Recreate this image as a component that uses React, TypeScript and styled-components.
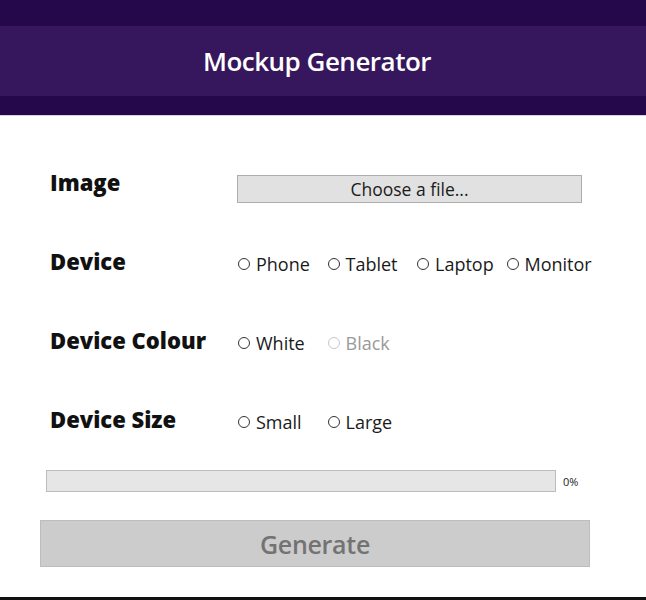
import React, { useState } from 'react';
import styled, { createGlobalStyle } from 'styled-components';

const GlobalStyle = createGlobalStyle`
  * {
    box-sizing: border-box;
  }
  body {
    margin: 0;
    background: #ffffff;
    font-family: 'Open Sans', 'Noto Sans', sans-serif;
    color: #1a1a1a;
  }
`;

const DEVICES = ['Phone', 'Tablet', 'Laptop', 'Monitor'];
const COLOURS = ['White', 'Black'];
const SIZES = ['Small', 'Large'];

const Page = styled.div`
  height: 600px;
  display: flex;
  flex-direction: column;
  border-bottom: 3px solid #111111;
`;

const Header = styled.header`
  background: #25084c;
  padding: 26px 0 19px;
  border-bottom: 1px solid #d8d4de;
`;

const TitleBar = styled.div`
  height: 70px;
  background: #36175d;
  display: flex;
  align-items: center;
  justify-content: center;
  padding-right: 12px;
`;

const Title = styled.h1`
  margin: 0;
  font-size: 26px;
  font-weight: 600;
  color: #ffffff;
  letter-spacing: -0.5px;
`;

const Form = styled.form`
  padding: 51px 40px 0;
  display: flex;
  flex-direction: column;
`;

const Row = styled.div<{ $last?: boolean }>`
  display: grid;
  grid-template-columns: 187px auto;
  align-items: start;
  height: 30px;
  padding-left: 10px;
  margin-bottom: ${(p) => (p.$last ? '36px' : '49px')};
`;

const Label = styled.div`
  font-size: 22px;
  font-weight: 800;
  line-height: 30px;
  color: #111111;
  white-space: nowrap;
`;

const FileButton = styled.label`
  margin-top: 8px;
  width: 345px;
  height: 28px;
  display: flex;
  align-items: center;
  justify-content: center;
  background: #e1e1e1;
  border: 1px solid #adadad;
  font-size: 17.5px;
  color: #1a1a1a;
  cursor: pointer;
  input {
    display: none;
  }
`;

const Options = styled.div`
  margin-top: 6px;
  display: flex;
`;

const Option = styled.label<{ $disabled?: boolean }>`
  width: 89.5px;
  display: flex;
  align-items: center;
  gap: 6px;
  font-size: 18px;
  line-height: 24px;
  color: ${(p) => (p.$disabled ? '#9a9a9a' : '#1a1a1a')};
  cursor: ${(p) => (p.$disabled ? 'default' : 'pointer')};
  white-space: nowrap;
`;

const Radio = styled.input`
  appearance: none;
  margin: 0 0 0 1px;
  width: 12px;
  height: 12px;
  border-radius: 50%;
  border: 1px solid #333333;
  background: #ffffff;
  flex-shrink: 0;
  &:checked {
    background: radial-gradient(circle, #333333 0 3px, #ffffff 3.5px);
  }
  &:disabled {
    border-color: #c8c8c8;
  }
`;

const ProgressRow = styled.div`
  display: flex;
  align-items: center;
  gap: 7px;
  padding-left: 6px;
`;

const Track = styled.div`
  width: 510px;
  height: 22px;
  background: #e6e6e6;
  border: 1px solid #bcbcbc;
`;

const Fill = styled.div`
  height: 100%;
  background: #06b025;
`;

const Percent = styled.span`
  font-size: 11px;
  color: #222222;
`;

const GenerateButton = styled.button`
  margin-top: 28px;
  width: 550px;
  height: 47px;
  background: #cccccc;
  border: 1px solid #bdbdbd;
  color: #737373;
  font-family: inherit;
  font-size: 25px;
  font-weight: 600;
  letter-spacing: -0.3px;
  padding: 0;
`;

const RadioGroup: React.FC<{
  name: string;
  options: string[];
  disabled?: string[];
  value: string;
  onChange: (v: string) => void;
}> = ({ name, options, disabled = [], value, onChange }) => (
  <Options>
    {options.map((opt) => {
      const off = disabled.includes(opt);
      return (
        <Option key={opt} $disabled={off}>
          <Radio
            type="radio"
            name={name}
            disabled={off}
            checked={value === opt}
            onChange={() => onChange(opt)}
          />
          {opt}
        </Option>
      );
    })}
  </Options>
);

export default function App() {
  const [device, setDevice] = useState('');
  const [colour, setColour] = useState('');
  const [size, setSize] = useState('');
  const progress = 0;

  return (
    <Page>
      <GlobalStyle />
      <Header>
        <TitleBar>
          <Title>Mockup Generator</Title>
        </TitleBar>
      </Header>
      <Form onSubmit={(e) => e.preventDefault()}>
        <Row>
          <Label>Image</Label>
          <FileButton>
            Choose a file...
            <input type="file" accept="image/*" />
          </FileButton>
        </Row>
        <Row>
          <Label>Device</Label>
          <RadioGroup name="device" options={DEVICES} value={device} onChange={setDevice} />
        </Row>
        <Row>
          <Label>Device Colour</Label>
          <RadioGroup
            name="colour"
            options={COLOURS}
            disabled={['Black']}
            value={colour}
            onChange={setColour}
          />
        </Row>
        <Row $last>
          <Label>Device Size</Label>
          <RadioGroup name="size" options={SIZES} value={size} onChange={setSize} />
        </Row>
        <ProgressRow>
          <Track>
            <Fill style={{ width: `${progress}%` }} />
          </Track>
          <Percent>{progress}%</Percent>
        </ProgressRow>
        <GenerateButton type="submit" disabled>
          Generate
        </GenerateButton>
      </Form>
    </Page>
  );
}
